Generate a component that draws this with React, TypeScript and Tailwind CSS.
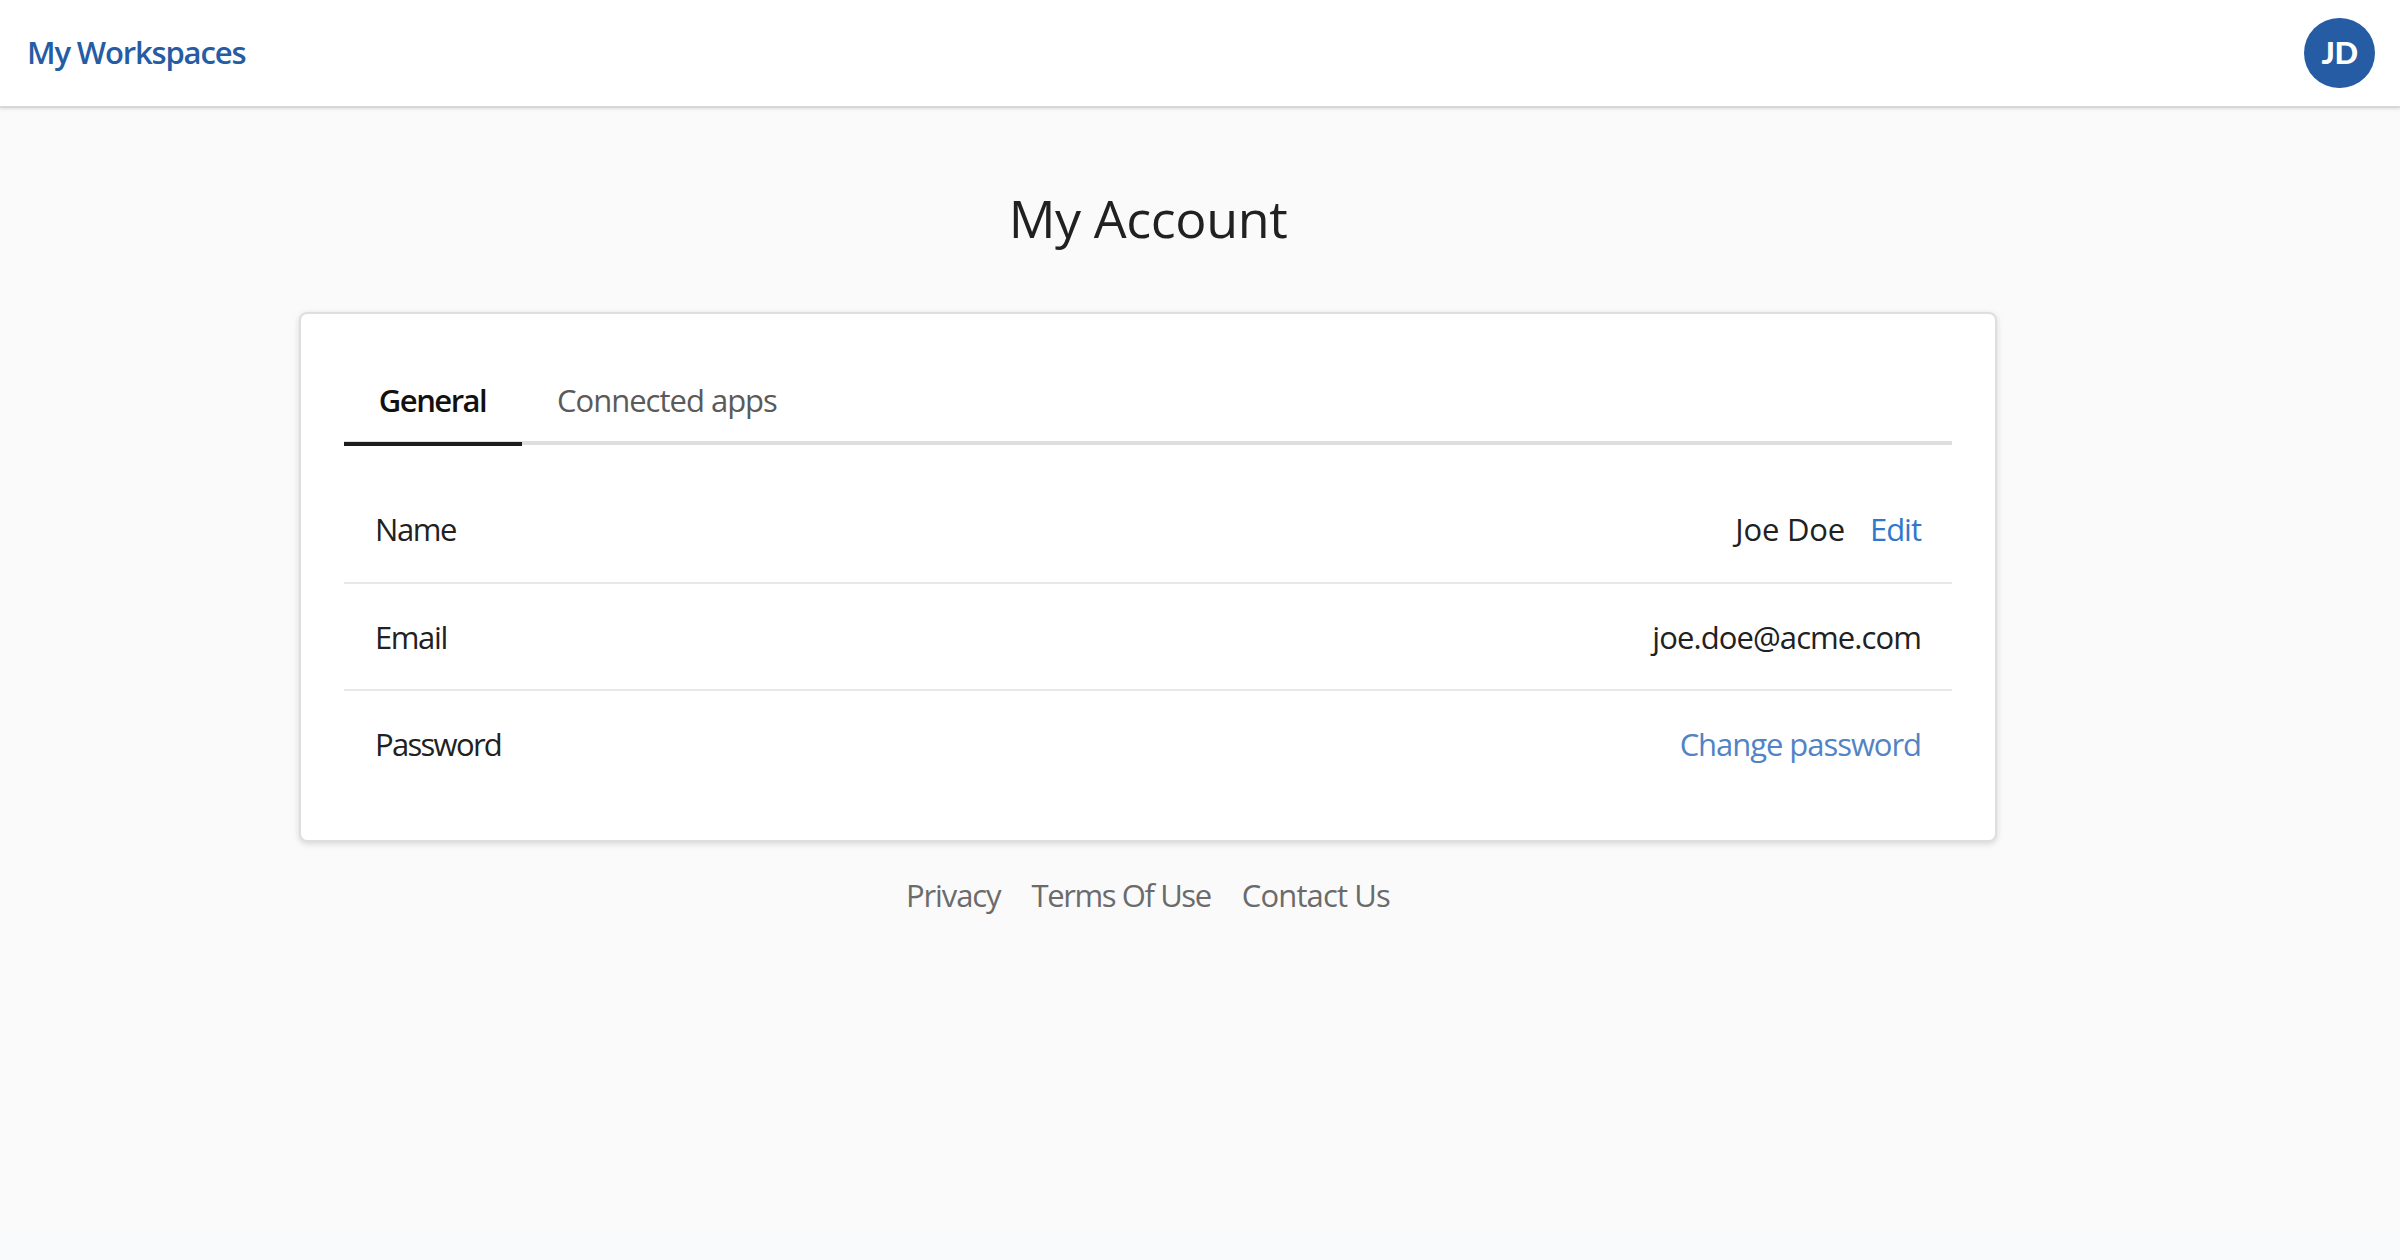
import React from "react";

const footerLinks = [
  { label: "Privacy", className: "tracking-[-1.1px]" },
  { label: "Terms Of Use", className: "tracking-[-1.4px]" },
  { label: "Contact Us", className: "tracking-[-0.85px]" },
];

const Row = ({
  label,
  children,
}: {
  label: React.ReactNode;
  children: React.ReactNode;
}) => {
  return (
    <div className="flex h-[107px] items-center justify-between border-b-2 border-[#e8e8e8] px-[31px] pt-px first:pt-0 last:border-b-0 last:pt-0">
      {label}
      <div className="flex items-center">{children}</div>
    </div>
  );
};

const Header = () => {
  return (
    <header className="flex h-[108px] items-center justify-between border-b-2 border-[#d8d8d8] bg-white pl-[27px] pr-[25px] shadow-[0_1px_3px_rgba(0,0,0,0.12)]">
      <a className="pb-px text-[31px] font-semibold leading-none tracking-[-1.15px] text-[#255ca3]">
        My Workspaces
      </a>
      <div className="flex h-[70px] w-[71px] items-center justify-center rounded-full bg-[#255ca3] pb-px font-['Lato',sans-serif] text-[31px] font-black leading-none tracking-[-0.5px] text-white">
        JD
      </div>
    </header>
  );
};

const App = () => {
  return (
    <div className="h-[1260px] w-[2400px] overflow-hidden bg-[#f8fafc] font-['Open_Sans',sans-serif] text-[31px] leading-none text-[#212121]">
      <div className="h-[1232px] bg-[#fafafa]">
        <Header />
        <main className="ml-[299px] flex w-[1698px] flex-col items-center">
          <h1 className="mt-[82px] text-[52px] leading-[56px] tracking-[-0.4px]">
            My Account
          </h1>
          <section className="mt-[66px] h-[530px] w-full rounded-[8px] border-2 border-[#dedede] bg-white px-[43px] shadow-[0_2px_6px_rgba(0,0,0,0.14)]">
            <nav className="mt-[56px] flex h-[75px] border-b-4 border-[#dedede]">
              <div className="-mb-[5px] flex w-[178px] items-center justify-center border-b-4 border-[#1c1c1c] pb-[11px] pr-px font-semibold tracking-[-1.5px] text-[#111]">
                General
              </div>
              <div className="flex items-center pb-[10px] pl-[35px] tracking-[-1px] text-[#5a5a5a]">
                Connected apps
              </div>
            </nav>
            <div className="mt-[32px]">
              <Row label={<span className="tracking-[-1.4px]">Name</span>}>
                <span className="tracking-[-0.2px]">Joe Doe</span>
                <a className="ml-[25px] tracking-[-1px] text-[#3178cb]">Edit</a>
              </Row>
              <Row label={<span className="tracking-[-1.4px]">Email</span>}>
                <span className="tracking-[-0.92px]">joe.doe@acme.com</span>
              </Row>
              <Row label={<span className="tracking-[-1.7px]">Password</span>}>
                <a className="tracking-[-1.05px] text-[#5283c5]">
                  Change password
                </a>
              </Row>
            </div>
          </section>
          <footer className="mt-[38px] flex gap-[31px] text-[#6b6b6b]">
            {footerLinks.map((link) => (
              <a key={link.label} className={link.className}>
                {link.label}
              </a>
            ))}
          </footer>
        </main>
      </div>
    </div>
  );
};

export default App;
